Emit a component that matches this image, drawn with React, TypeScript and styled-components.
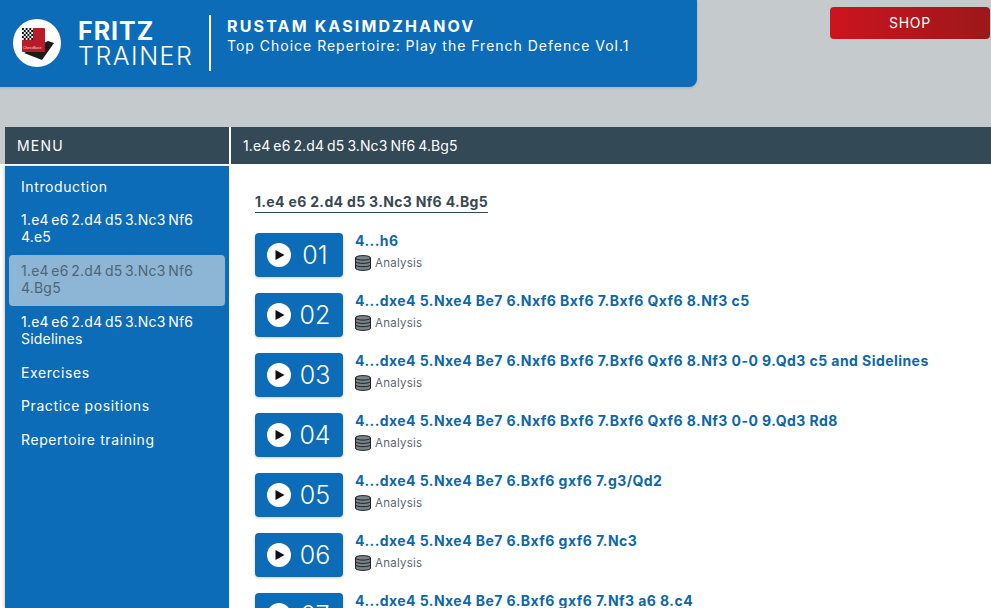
import React from "react";
import styled, { createGlobalStyle } from "styled-components";

const FONT = `Inter, "Open Sans", "Liberation Sans", sans-serif`;

const GlobalStyle = createGlobalStyle`
  html, body {
    margin: 0;
    padding: 0;
    height: 100%;
    overflow: hidden;
    background: #c5cacc;
    font-family: ${FONT};
  }
  * { box-sizing: border-box; }
`;

const Page = styled.div`
  width: 991px;
  height: 608px;
  overflow: hidden;
`;

const TopBar = styled.div`
  display: flex;
  justify-content: space-between;
  align-items: flex-start;
  height: 127px;
  padding-right: 1px;
`;

const Brand = styled.header`
  display: flex;
  align-items: center;
  width: 697px;
  height: 87px;
  padding: 0 0 1px 13px;
  background: #0c6cb8;
  border-bottom-right-radius: 8px;
  box-shadow: 0 1px 3px rgba(0, 0, 0, 0.15);
  color: #fff;
`;

const LogoDisc = styled.div`
  display: flex;
  flex: none;
  width: 48px;
  height: 48px;
  border-radius: 50%;
  background: #fff;
`;

const Wordmark = styled.div`
  display: flex;
  flex-direction: column;
  width: 131px;
  margin-left: 17px;
`;

const Fritz = styled.span`
  font-size: 25px;
  line-height: 25px;
  font-weight: 700;
  letter-spacing: 1px;
`;

const Trainer = styled.span`
  font-size: 25px;
  line-height: 24px;
  font-weight: 300;
  letter-spacing: 1.5px;
`;

const Divider = styled.div`
  flex: none;
  width: 2px;
  height: 56px;
  margin-right: 16px;
  background: #fff;
`;

const CourseInfo = styled.div`
  display: flex;
  flex-direction: column;
  align-self: flex-start;
  gap: 1px;
  margin-top: 16px;
`;

const Author = styled.span`
  font-size: 16px;
  line-height: 20px;
  font-weight: 700;
  letter-spacing: 2.15px;
`;

const CourseTitle = styled.span`
  font-size: 14px;
  line-height: 18px;
  letter-spacing: 0.99px;
`;

const ShopButton = styled.button`
  width: 160px;
  height: 32px;
  margin-top: 7px;
  padding: 0 0 2px;
  border: 0;
  border-radius: 4px;
  background: linear-gradient(90deg, #cc141e, #9c181a);
  color: #fff;
  font-family: ${FONT};
  font-size: 14px;
  letter-spacing: 0.8px;
`;

const Columns = styled.div`
  display: grid;
  grid-template-columns: 224px 1fr;
  column-gap: 2px;
  height: 481px;
  padding-left: 5px;
  background: #fff;
`;

const PanelTitle = styled.div`
  display: flex;
  flex: none;
  align-items: center;
  height: 37px;
  padding: 0 0 1px 12px;
  background: #344956;
  color: #fff;
  font-size: 14px;
  letter-spacing: 0.1px;
  word-spacing: -1px;
`;

const MenuTitle = styled(PanelTitle)`
  letter-spacing: 1.2px;
  box-shadow: -5px 0 0 #c5cacc;
`;

const MenuColumn = styled.nav`
  display: flex;
  flex-direction: column;
  min-height: 0;
`;

const MenuList = styled.div`
  display: flex;
  flex-direction: column;
  flex: 1;
  margin-top: 2px;
  padding: 4px 4px 0;
  background: #0c6cb8;
  box-shadow: -1px 0 3px rgba(0, 0, 0, 0.2);
`;

const MenuItem = styled.a<{ $active?: boolean; $moves?: boolean }>`
  display: block;
  margin-top: ${(p) => (p.$active ? "1px" : "0")};
  padding: ${(p) => (p.$active ? "6.5px 12px 10.1px" : "7.5px 12px 9.1px")};
  border-radius: 4px;
  background: ${(p) => (p.$active ? "#8db5d5" : "transparent")};
  color: ${(p) => (p.$active ? "#4f6675" : "#fff")};
  font-size: 14px;
  line-height: 17px;
  letter-spacing: ${(p) => (p.$moves ? "0.2px" : "0.6px")};
  word-spacing: ${(p) => (p.$moves ? "-1.5px" : "0")};
`;

const MainColumn = styled.main`
  display: flex;
  flex-direction: column;
  min-height: 0;
  overflow: hidden;
`;

const Content = styled.div`
  padding: 27px 24px 0;
`;

const SectionHeading = styled.h2`
  display: inline-block;
  margin: 0 0 20px;
  padding-bottom: 2px;
  border-bottom: 1px solid #344956;
  color: #3a4852;
  font-size: 14px;
  line-height: 17px;
  font-weight: 700;
  letter-spacing: 0.33px;
`;

const Lessons = styled.div`
  display: flex;
  flex-direction: column;
  gap: 16px;
`;

const Lesson = styled.div`
  display: flex;
  align-items: flex-start;
  gap: 12px;
`;

const PlayButton = styled.div`
  display: flex;
  flex: none;
  align-items: center;
  width: 88px;
  height: 44px;
  padding-left: 12px;
  gap: 8px;
  border-radius: 4px;
  background: #0c6cb8;
  box-shadow: 0 1px 3px rgba(0, 0, 0, 0.2);
  color: #fff;
  font-size: 25px;
  font-weight: 300;
`;

const LessonNumber = styled.span`
  width: 32px;
  text-align: center;
`;

const LessonText = styled.div`
  display: flex;
  flex-direction: column;
  gap: 8px;
  min-width: 0;
  padding-top: 1px;
`;

const LessonTitle = styled.a`
  color: #0f67a8;
  font-size: 14px;
  line-height: 13px;
  font-weight: 700;
  letter-spacing: 0.44px;
  white-space: nowrap;
`;

const LessonMeta = styled.div`
  display: flex;
  align-items: center;
  gap: 4px;
  color: #5c6670;
  font-size: 11.5px;
  line-height: 16px;
  letter-spacing: 0.25px;
`;

const Logo = () => (
  <svg width="48" height="48" viewBox="0 0 48 48" aria-hidden="true">
    <path d="M11 34 L29 41 L41 24 L35 22 Z" fill="#1c1a1c" />
    <rect x="9" y="9" width="23" height="24" rx="1" fill="#b81c26" />
    <rect x="9" y="9" width="11" height="12" fill="#eee" />
    {[0, 1, 2, 3, 4, 5].map((r) =>
      [0, 1, 2, 3, 4, 5].map((c) =>
        (r + c) % 2 === 0 ? (
          <rect key={`${r}-${c}`} x={9 + c * 1.84} y={9 + r * 2} width="1.84" height="2" fill="#111" />
        ) : null
      )
    )}
    <text x="10" y="30" fill="#f3dede" fontSize="3.6" fontFamily="Liberation Sans, sans-serif">
      ChessBase
    </text>
  </svg>
);

const PlayIcon = () => (
  <svg width="24" height="24" viewBox="0 0 24 24" aria-hidden="true">
    <circle cx="12" cy="12" r="12" fill="#fff" />
    <path d="M8.5 7 L17.5 12 L8.5 17 Z" fill="#111" />
  </svg>
);

const DatabaseIcon = () => (
  <svg width="16" height="16" viewBox="0 0 16 16" aria-hidden="true">
    <path d="M0.5 3 C0.5 -0.2 15.5 -0.2 15.5 3 V13 C15.5 16.2 0.5 16.2 0.5 13 Z" fill="#78838a" stroke="#222" strokeWidth="1" />
    <path d="M0.5 3 C0.5 5.8 15.5 5.8 15.5 3 M0.5 6.3 C0.5 9.1 15.5 9.1 15.5 6.3 M0.5 9.6 C0.5 12.4 15.5 12.4 15.5 9.6" fill="none" stroke="#222" strokeWidth="1" />
  </svg>
);

const menu = [
  { label: "Introduction" },
  { label: "1.e4 e6 2.d4 d5 3.Nc3 Nf6 4.e5", moves: true },
  { label: "1.e4 e6 2.d4 d5 3.Nc3 Nf6 4.Bg5", moves: true, active: true },
  { label: "1.e4 e6 2.d4 d5 3.Nc3 Nf6 Sidelines", moves: true },
  { label: "Exercises" },
  { label: "Practice positions" },
  { label: "Repertoire training" },
];

const lessons = [
  "4...h6",
  "4...dxe4 5.Nxe4 Be7 6.Nxf6 Bxf6 7.Bxf6 Qxf6 8.Nf3 c5",
  "4...dxe4 5.Nxe4 Be7 6.Nxf6 Bxf6 7.Bxf6 Qxf6 8.Nf3 0-0 9.Qd3 c5 and Sidelines",
  "4...dxe4 5.Nxe4 Be7 6.Nxf6 Bxf6 7.Bxf6 Qxf6 8.Nf3 0-0 9.Qd3 Rd8",
  "4...dxe4 5.Nxe4 Be7 6.Bxf6 gxf6 7.g3/Qd2",
  "4...dxe4 5.Nxe4 Be7 6.Bxf6 gxf6 7.Nc3",
  "4...dxe4 5.Nxe4 Be7 6.Bxf6 gxf6 7.Nf3 a6 8.c4",
];

const App: React.FC = () => (
  <Page>
    <GlobalStyle />
    <TopBar>
      <Brand>
        <LogoDisc>
          <Logo />
        </LogoDisc>
        <Wordmark>
          <Fritz>FRITZ</Fritz>
          <Trainer>TRAINER</Trainer>
        </Wordmark>
        <Divider />
        <CourseInfo>
          <Author>RUSTAM KASIMDZHANOV</Author>
          <CourseTitle>Top Choice Repertoire: Play the French Defence Vol.1</CourseTitle>
        </CourseInfo>
      </Brand>
      <ShopButton>SHOP</ShopButton>
    </TopBar>
    <Columns>
      <MenuColumn>
        <MenuTitle>MENU</MenuTitle>
        <MenuList>
          {menu.map((item) => (
            <MenuItem key={item.label} $active={item.active} $moves={item.moves}>
              {item.label}
            </MenuItem>
          ))}
        </MenuList>
      </MenuColumn>
      <MainColumn>
        <PanelTitle>1.e4 e6 2.d4 d5 3.Nc3 Nf6 4.Bg5</PanelTitle>
        <Content>
          <SectionHeading>1.e4 e6 2.d4 d5 3.Nc3 Nf6 4.Bg5</SectionHeading>
          <Lessons>
            {lessons.map((title, i) => (
              <Lesson key={title}>
                <PlayButton>
                  <PlayIcon />
                  <LessonNumber>{String(i + 1).padStart(2, "0")}</LessonNumber>
                </PlayButton>
                <LessonText>
                  <LessonTitle>{title}</LessonTitle>
                  <LessonMeta>
                    <DatabaseIcon />
                    Analysis
                  </LessonMeta>
                </LessonText>
              </Lesson>
            ))}
          </Lessons>
        </Content>
      </MainColumn>
    </Columns>
  </Page>
);

export default App;
